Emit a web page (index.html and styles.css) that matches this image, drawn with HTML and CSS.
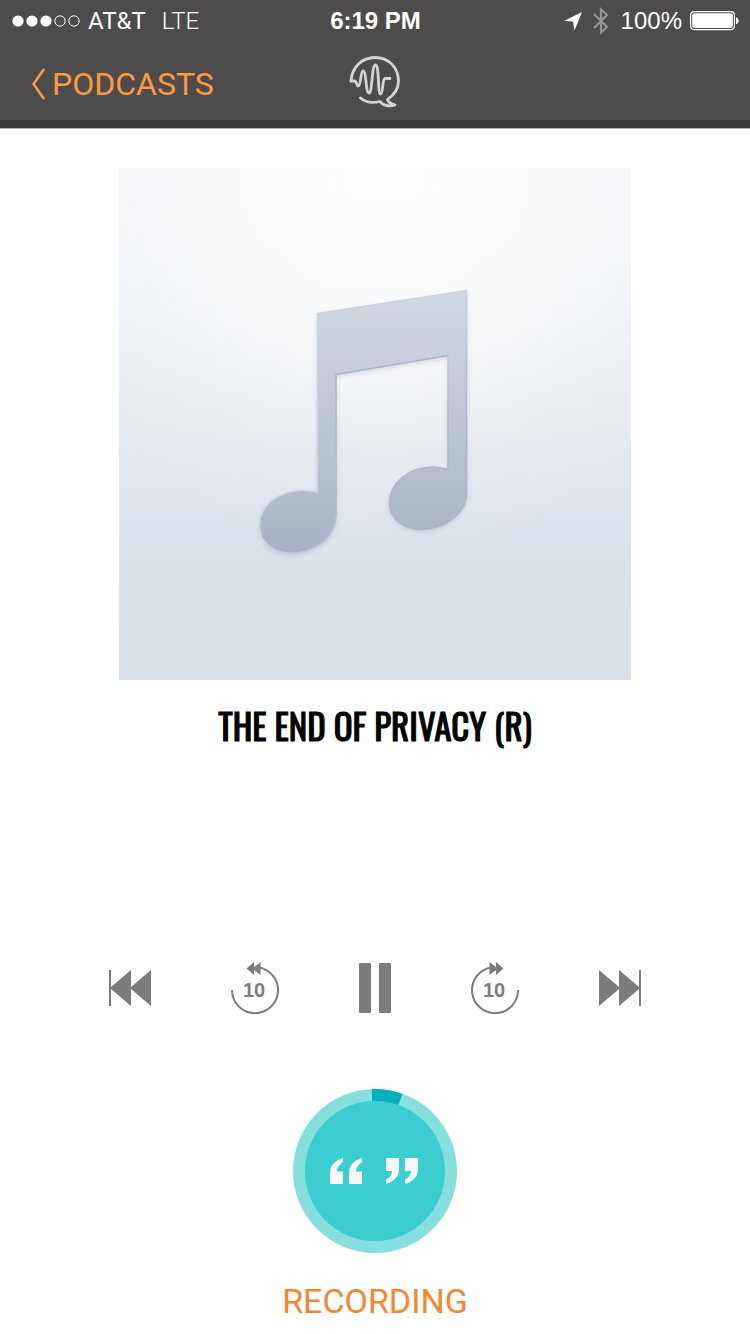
FILE: index.html
```html
<!DOCTYPE html>
<html lang="en">
<head>
<meta charset="utf-8">
<meta name="viewport" content="width=device-width, initial-scale=1">
<title>The End of Privacy (R)</title>
<link rel="stylesheet" href="styles.css">
</head>
<body>
<div class="app">
  <header class="header">
    <div class="status">
      <div class="status-left">
        <svg class="signal" width="68" height="12" viewBox="0 0 68 12" aria-hidden="true">
          <g fill="#fff"><circle cx="6" cy="6" r="5.6"/><circle cx="20" cy="6" r="5.6"/><circle cx="34" cy="6" r="5.6"/></g>
          <g fill="none" stroke="#fff"><circle cx="48" cy="6" r="5.2"/><circle cx="62" cy="6" r="5.2"/></g>
        </svg>
        <span class="carrier">AT&amp;T</span>
        <span class="network">LTE</span>
      </div>
      <div class="clock">6:19 PM</div>
      <div class="status-right">
        <svg width="18" height="19" viewBox="0 0 18 19" aria-hidden="true"><path d="M0 9 18 0 10.500 18.500 9 9.500Z" fill="#fff"/></svg>
        <svg class="bluetooth" width="18" height="28" viewBox="0 0 18 28" aria-hidden="true"><path d="M2 7 15 20 9 25.500V2.500L15 8 2 21" fill="none" stroke="#959394" stroke-width="2.200"/></svg>
        <span class="percent">100%</span>
        <svg width="49" height="20" viewBox="0 0 49 20" aria-hidden="true">
          <rect x=".6" y=".6" width="43.800" height="18" rx="3.500" fill="none" stroke="#fff" stroke-width="1.200"/>
          <rect x="2.200" y="2.200" width="40.600" height="14.800" rx="2" fill="#fff"/>
          <path d="M46 6.200c3.500 1 3.500 6 0 7Z" fill="#fff"/>
        </svg>
      </div>
    </div>
    <nav class="nav">
      <a class="back" href="#">
        <svg width="14" height="32" viewBox="0 0 14 32" aria-hidden="true"><path d="M12 1 1.500 16 12 31" fill="none" stroke="#fc9a3d" stroke-width="2.600"/></svg>
        <span>PODCASTS</span>
      </a>
      <svg class="logo" width="52" height="52" viewBox="0 0 52 52" role="img" aria-label="Home">
        <g fill="none" stroke="#d6d4d3" stroke-width="2.800" stroke-linecap="round" stroke-linejoin="round">
          <path d="M2 25C3 11 13 1.500 26 1.500 40 1.500 49.500 12 49.500 25 49.500 33 45 39 38.500 43.500 39 46.500 42 47.500 46 49 39 51 34 49 31 45.500 23 47.500 16 46 11.500 42"/>
          <path d="M2 25H5.500C8 25 7.300 30 9.200 30 12.500 30 11 15 14.200 15 17.500 15 16.500 37 20 37 23.500 37 22.500 9 26.500 9 30.500 9 28.500 38 31.500 38 34.500 38 33 23 36 22.500H41"/>
        </g>
      </svg>
    </nav>
  </header>

  <main class="player">
    <svg class="artwork" viewBox="0 0 512 512" role="img" aria-label="Album artwork">
      <defs>
        <linearGradient id="sky" x1="0" y1="0" x2="0" y2="1">
          <stop offset="0" stop-color="#f2f3f8"/><stop offset=".2" stop-color="#eef2f6"/><stop offset=".5" stop-color="#e6eaef"/><stop offset=".6" stop-color="#e0e5ee"/><stop offset=".8" stop-color="#dae1e9"/><stop offset="1" stop-color="#d8e0e8"/>
        </linearGradient>
        <radialGradient id="glow" gradientUnits="userSpaceOnUse" cx="266" cy="0" r="390">
          <stop offset="0" stop-color="#fff" stop-opacity=".86"/><stop offset=".25" stop-color="#fff" stop-opacity=".74"/><stop offset=".5" stop-color="#fff" stop-opacity=".5"/><stop offset=".7" stop-color="#fff" stop-opacity=".22"/><stop offset="1" stop-color="#fff" stop-opacity="0"/>
        </radialGradient>
        <linearGradient id="note" x1="0" y1="0" x2="0" y2="1">
          <stop offset="0" stop-color="#d0d9e3"/><stop offset=".28" stop-color="#c7ceda"/><stop offset=".65" stop-color="#b6c0cd"/><stop offset="1" stop-color="#a9b2c5"/>
        </linearGradient>
        <linearGradient id="edge" x1="0" y1="0" x2="1" y2="1">
          <stop offset=".5" stop-color="#cad3de"/><stop offset=".7" stop-color="#aeb5c8"/>
        </linearGradient>
        <filter id="shadow" x="-10%" y="-10%" width="120%" height="120%"><feDropShadow dx="0" dy="2" stdDeviation="2" flood-color="#707580" flood-opacity=".22"/></filter>
      </defs>
      <rect width="512" height="512" fill="url(#sky)"/>
      <rect width="512" height="512" fill="url(#glow)"/>
      <path d="M198.500 145.500 347.500 122.500V325C347.500 345 326 361.500 302 361.500 284 361.500 270.500 350 270.500 335 270.500 315 290 299 314 299Q322 299 329 301.500V187.500L217 206.500V347C217 368 196 385 172 385 154 385 140.500 374 140.500 358 140.500 338 160 322.500 184 322.500Q192 322.500 198.500 324.500Z" fill="url(#note)" stroke="url(#edge)" stroke-width="1.500" filter="url(#shadow)"/>
      <path d="M329 187.500 217 206.500V347" fill="none" stroke="#aeb5c8" stroke-width="1.500"/>
    </svg>

    <h1 class="title">THE END OF PRIVACY (R)</h1>

    <div class="controls">
      <button class="control" aria-label="Previous"><svg width="42" height="36" viewBox="0 0 42 36"><path d="M0 0H2V17L22 0V17L42 0V36L22 19V36L2 19V36H0Z"/></svg></button>
      <button class="control skip" aria-label="Back 10 seconds">
        <svg width="48" height="52" viewBox="0 0 48 52"><path d="M1 28A23 23 0 1 0 28 5.500" fill="none" stroke="#7c7c7c" stroke-width="2"/><path d="M15.500 6.500 23 0V5L29.500 0V13L23 8V13Z"/></svg>
        <span class="seconds">10</span>
      </button>
      <button class="control" aria-label="Pause"><svg width="32" height="50" viewBox="0 0 32 50"><rect width="12" height="50" rx="1"/><rect x="20" width="12" height="50" rx="1"/></svg></button>
      <button class="control skip" aria-label="Forward 10 seconds">
        <svg width="48" height="52" viewBox="0 0 48 52"><path d="M47 28A23 23 0 1 1 20 5.500" fill="none" stroke="#7c7c7c" stroke-width="2"/><path d="M32.500 6.500 25 0V5L18.500 0V13L25 8V13Z"/></svg>
        <span class="seconds">10</span>
      </button>
      <button class="control" aria-label="Next"><svg width="42" height="36" viewBox="0 0 42 36"><path d="M42 0H40V17L20 0V17L0 0V36L20 19V36L40 19V36H42Z"/></svg></button>
    </div>

    <button class="record" aria-labelledby="record-label">
      <svg width="164" height="164" viewBox="0 0 164 164" aria-hidden="true">
        <circle cx="82" cy="82" r="82" fill="#86dedd"/>
        <path d="M79 82V0Q95-.5 109.500 5Z" fill="#00b1b8"/>
        <circle cx="82" cy="82" r="70" fill="#3bcdcf"/>
        <g fill="#f8f8f8">
          <path id="open-mark" d="M37 95V83.500C37 76.500 43 70.500 50 69V73C46 76 44 79 44 82.500H50V95Z"/>
          <use href="#open-mark" x="19"/>
          <path id="close-mark" d="M106 69V80.500C106 87.500 100 93.500 93 95V91C97 88 99 85 99 82H93V69Z"/>
          <use href="#close-mark" x="19"/>
        </g>
      </svg>
    </button>
    <p class="record-label" id="record-label">RECORDING</p>
  </main>
</div>
</body>
</html>
```
FILE: styles.css
```css
* {
  box-sizing: border-box;
}

body {
  margin: 0;
  background: #fff;
  font-family: Roboto, "Liberation Sans", sans-serif;
}

.header {
  background: #4d4b4c;
  border-bottom: 8px solid #393939;
  box-shadow: 0 1px 0 #b5b5b5;
  color: #fff;
}

.status,
.nav {
  display: grid;
  grid-template-columns: 1fr auto 1fr;
  align-items: center;
}

.status {
  height: 42px;
  padding: 0 11px 0 12px;
  font-size: 24px;
  line-height: 42px;
}

.status-left,
.status-right {
  display: flex;
  align-items: center;
}

.status-left {
  gap: 8px;
}

.status-right {
  justify-content: flex-end;
  gap: 8px;
  font-family: "Liberation Sans", Arial, sans-serif;
}

.network {
  margin-left: 8px;
  font-weight: 300;
}

.clock {
  font-family: "Liberation Sans", Arial, sans-serif;
  font-weight: 700;
}

.bluetooth {
  margin: 0 3px 0 2px;
}

.nav {
  height: 78px;
  padding: 2px 32px 0;
}

.back {
  display: flex;
  align-items: center;
  gap: 6px;
  padding-top: 4px;
  color: #fc9a3d;
  font-size: 32px;
  line-height: 40px;
  text-decoration: none;
}

.back svg {
  flex: none;
}

.player {
  display: flex;
  flex-direction: column;
  align-items: center;
  padding: 40px 16px 8px;
}

.artwork {
  display: block;
  width: 100%;
  max-width: 512px;
}

.title {
  margin: 15px 0 0;
  color: #000;
  font-family: Oswald, "Roboto Condensed", "Liberation Sans Narrow", sans-serif;
  font-size: 35px;
  font-weight: 400;
  line-height: 60px;
  text-align: center;
  -webkit-text-stroke: 1px #000;
}

.controls {
  display: flex;
  align-items: center;
  justify-content: center;
  gap: 80px;
  margin-top: 207px;
}

.control,
.record {
  display: block;
  padding: 0;
  border: 0;
  background: none;
  cursor: pointer;
}

.control svg,
.record svg {
  display: block;
  fill: #7c7c7c;
}

.skip {
  position: relative;
}

.seconds {
  position: absolute;
  inset: 4px 2px 0 0;
  color: #7c7c7c;
  font-family: "Liberation Sans", Arial, sans-serif;
  font-size: 20px;
  font-weight: 700;
  line-height: 48px;
  text-align: center;
}

.record {
  margin-top: 75px;
  border-radius: 50%;
}

.record-label {
  margin: 28px 0 0;
  color: #f6862f;
  font-size: 34px;
  line-height: 40px;
}
```
